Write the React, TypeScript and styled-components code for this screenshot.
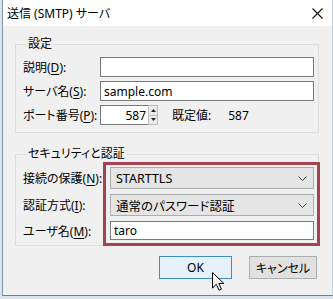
import type { FC, ReactNode } from 'react'
import styled, { createGlobalStyle } from 'styled-components'

const GlobalStyle = createGlobalStyle`
  html, body {
    margin: 0;
    padding: 0;
    background: #d9e4ef;
  }
  body {
    font-family: "Noto Sans", "Noto Sans CJK JP", sans-serif;
    font-size: 12px;
    color: #000;
    font-feature-settings: "palt";
  }
`

const Chevron: FC = () => (
  <svg width="9" height="5" viewBox="0 0 9 5" aria-hidden>
    <path d="M0.5 0.5 L4.5 4.5 L8.5 0.5" fill="none" stroke="#444" strokeWidth="1" />
  </svg>
)

const Combo: FC<{ children: ReactNode }> = ({ children }) => (
  <ComboBox>
    <span>{children}</span>
    <Chevron />
  </ComboBox>
)

const App: FC = () => (
  <>
    <GlobalStyle />
    <Frame>
      <Window>
        <TitleBar>
          <Title>送信 (SMTP) サーバ</Title>
          <CloseIcon width="11" height="11" viewBox="0 0 11 11" aria-hidden>
            <path d="M0.5 0.5 L10.5 10.5 M10.5 0.5 L0.5 10.5" stroke="#111" strokeWidth="1.1" />
          </CloseIcon>
        </TitleBar>

        <Body>
          <Group>
            <Legend>設定</Legend>
            <FormRow>
              <Label>
                説明(<u>D</u>):
              </Label>
              <TextBox />
            </FormRow>
            <FormRow>
              <Label>
                サーバ名(<u>S</u>):
              </Label>
              <TextBox>sample.com</TextBox>
            </FormRow>
            <FormRow>
              <Label>
                ポート番号(<u>P</u>):
              </Label>
              <PortBox>587</PortBox>
              <Spinner>
                <SpinButton>
                  <svg width="5" height="3" viewBox="0 0 5 3" aria-hidden>
                    <path d="M0 3 L2.5 0 L5 3 Z" fill="#222" />
                  </svg>
                </SpinButton>
                <SpinButton>
                  <svg width="5" height="3" viewBox="0 0 5 3" aria-hidden>
                    <path d="M0 0 L2.5 3 L5 0 Z" fill="#222" />
                  </svg>
                </SpinButton>
              </Spinner>
              <DefaultLabel>既定値:</DefaultLabel>
              <DefaultValue>587</DefaultValue>
            </FormRow>
          </Group>

          <Group $security>
            <Legend>セキュリティと認証</Legend>
            <SecurityRow>
              <LabelColumn>
                <Label $h={22}>
                  接続の保護(<u>N</u>):
                </Label>
                <Label $h={22}>
                  認証方式(<u>I</u>):
                </Label>
                <Label $h={20}>
                  ユーザ名(<u>M</u>):
                </Label>
              </LabelColumn>
              <Highlight>
                <Combo>STARTTLS</Combo>
                <Combo>通常のパスワード認証</Combo>
                <TextBox $full>taro</TextBox>
              </Highlight>
            </SecurityRow>
          </Group>

          <ButtonRow>
            <DialogButton $primary>
              OK
              <Cursor width="13" height="19" viewBox="0 0 13 19" aria-hidden>
                <path
                  d="M0.5 0.5 L0.5 16 L4.3 12.3 L7 18.2 L9.4 17.1 L6.8 11.4 L11.8 11.4 Z"
                  fill="#fff"
                  stroke="#000"
                  strokeWidth="1"
                  strokeLinejoin="round"
                />
              </Cursor>
            </DialogButton>
            <DialogButton>キャンセル</DialogButton>
          </ButtonRow>
        </Body>
      </Window>
    </Frame>
  </>
)

const Frame = styled.div`
  width: 333px;
  height: 299px;
  padding: 0 0 3px 2px;
  box-sizing: border-box;
  overflow: hidden;
`

const Window = styled.div`
  display: flex;
  flex-direction: column;
  height: 100%;
  box-sizing: border-box;
  border-left: 1px solid #8397ab;
  border-bottom: 1px solid #6f7f8f;
  border-right: 1px solid #c4d0dc;
  background: #f0f0f0;
`

const TitleBar = styled.div`
  display: flex;
  align-items: center;
  justify-content: space-between;
  height: 26px;
  flex-shrink: 0;
  padding: 0 9px 0 4px;
  background: #fff;
`

const Title = styled.span`
  font-size: 12px;
  line-height: 16px;
  padding-top: 1px;
`

const CloseIcon = styled.svg`
  display: block;
  margin-top: 1px;
`

const Body = styled.div`
  flex: 1;
  display: flex;
  flex-direction: column;
  padding: 10px 13px 0 12px;
`

const Group = styled.fieldset<{ $security?: boolean }>`
  margin: ${(p) => (p.$security ? '13px 0 0' : '0')};
  padding: ${(p) => (p.$security ? '0 0 0 7px' : '5px 4px 7px 7px')};
  border: 1px solid #dcdcdc;
  display: flex;
  flex-direction: column;
  gap: 4px;
  min-width: 0;
`

const Legend = styled.legend`
  padding: 0 2px;
  margin-left: 3px;
  font-size: 12px;
  line-height: 16px;
`

const FormRow = styled.div`
  display: flex;
  align-items: center;
  height: 20px;
`

const Label = styled.span<{ $h?: number }>`
  display: flex;
  align-items: center;
  width: 77px;
  flex-shrink: 0;
  height: ${(p) => (p.$h ? `${p.$h}px` : 'auto')};
  white-space: nowrap;

  u {
    text-underline-offset: 2px;
  }
`

const TextBox = styled.div<{ $full?: boolean }>`
  flex: 1;
  height: 20px;
  box-sizing: border-box;
  border: 1px solid #7a7a7a;
  background: #fff;
  padding: 0 3px;
  display: flex;
  align-items: center;
  font-size: 12px;
`

const PortBox = styled.div`
  width: 48px;
  height: 20px;
  box-sizing: border-box;
  border: 1px solid #7a7a7a;
  border-right: none;
  background: #fff;
  display: flex;
  align-items: center;
  justify-content: flex-end;
  padding-right: 2px;
`

const Spinner = styled.div`
  display: flex;
  flex-direction: column;
  width: 10px;
  height: 20px;
  gap: 0;
`

const SpinButton = styled.div`
  flex: 1;
  display: flex;
  align-items: center;
  justify-content: center;
  box-sizing: border-box;
  border: 1px solid #bdbdbd;
  background: #ececec;

  & + & {
    border-top: none;
  }
`

const DefaultLabel = styled.span`
  margin-left: 14px;
`

const DefaultValue = styled.span`
  margin-left: 17px;
`

const SecurityRow = styled.div`
  display: flex;
  align-items: flex-start;
  margin-right: -2px;
`

const LabelColumn = styled.div`
  display: flex;
  flex-direction: column;
  width: 80px;
  flex-shrink: 0;
  padding-top: 5px;
  gap: 5px;
`

const Highlight = styled.div`
  flex: 1;
  display: flex;
  flex-direction: column;
  gap: 5px;
  padding: 2px 3px 3px 4px;
  border: 3px solid #a5424f;
  margin-bottom: -1px;
`

const ComboBox = styled.div`
  height: 22px;
  box-sizing: border-box;
  border: 1px solid #adadad;
  background: #e5e5e5;
  display: flex;
  align-items: center;
  justify-content: space-between;
  padding: 0 6px 0 5px;
  font-size: 12.5px;
`

const ButtonRow = styled.div`
  display: flex;
  justify-content: flex-end;
  gap: 17px;
  margin-top: 10px;
  padding-right: 2px;
`

const DialogButton = styled.div<{ $primary?: boolean }>`
  position: relative;
  width: ${(p) => (p.$primary ? '73px' : '68px')};
  height: 23px;
  box-sizing: border-box;
  display: flex;
  align-items: center;
  justify-content: center;
  border: 1px solid ${(p) => (p.$primary ? '#3f8ccc' : '#adadad')};
  background: ${(p) => (p.$primary ? '#e5f1fb' : '#e1e1e1')};
  font-size: 12px;
`

const Cursor = styled.svg`
  position: absolute;
  left: 52px;
  top: 15px;
`

export default App
